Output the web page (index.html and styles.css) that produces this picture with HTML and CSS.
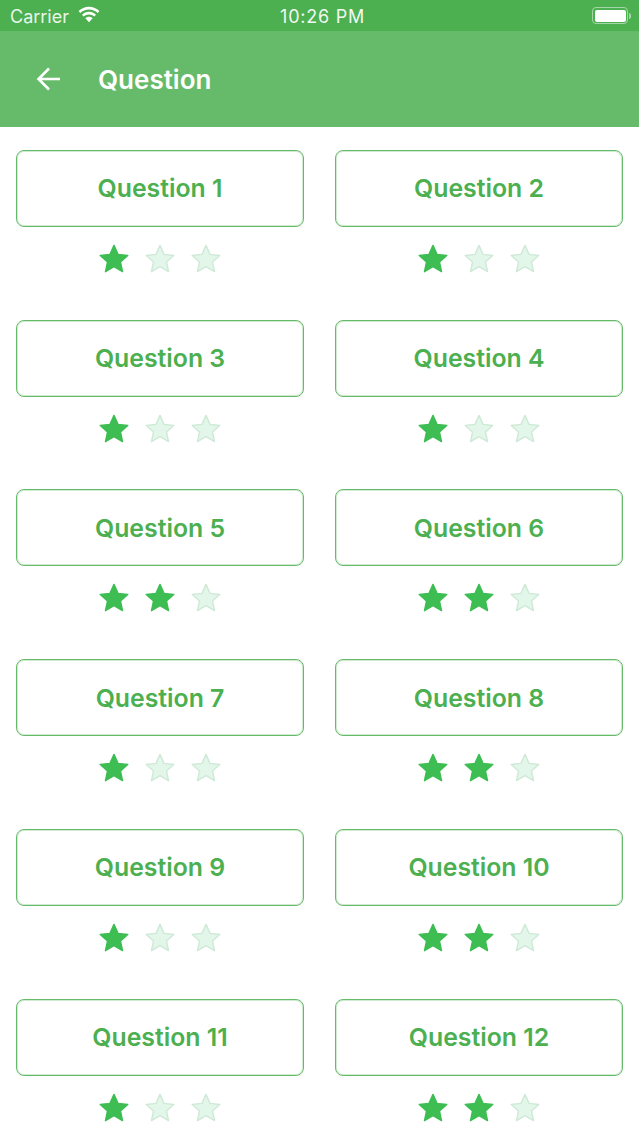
FILE: index.html
```html
<!DOCTYPE html>
<html lang="en">
<head>
<meta charset="utf-8">
<title>Question</title>
<link rel="stylesheet" href="styles.css">
</head>
<body>
<svg class="defs" width="0" height="0" aria-hidden="true">
  <symbol id="star" viewBox="0 0 32 32">
    <path d="M16 1.500l4.300 9.600 10.400 1.100-7.800 7 2.200 10.300-9.100-5.300-9.100 5.300 2.200-10.300-7.800-7 10.400-1.100z" stroke-linejoin="round"/>
  </symbol>
</svg>
<div class="status">
  <div class="status-left">
    <span>Carrier</span>
    <svg class="wifi" viewBox="0 0 22 16"><path d="M11 3.200c3.200 0 6.100 1.200 8.300 3.300l1.500-1.700C18.200 2.300 14.800.8 11 .8S3.800 2.300 1.200 4.800l1.500 1.700C4.900 4.400 7.800 3.200 11 3.200z"/><path d="M11 7.900c1.900 0 3.700.7 5 2l1.600-1.700C15.800 6.500 13.500 5.500 11 5.500s-4.800 1-6.600 2.700L6 9.900c1.300-1.300 3.100-2 5-2z"/><path d="M11 10.200c-1.300 0-2.500.5-3.400 1.400L11 15.200l3.400-3.600c-.9-.9-2.100-1.400-3.400-1.400z"/></svg>
  </div>
  <span class="status-time">10:26 PM</span>
  <div class="battery"><span class="battery-body"><span class="battery-fill"></span></span><span class="battery-cap"></span></div>
</div>
<header class="appbar">
  <svg class="back" viewBox="0 0 28 28"><path d="M25 14H4M14 3.500L3.500 14 14 24.500"/></svg>
  <h1>Question</h1>
</header>
<main class="grid">
  <section class="item"><button class="question">Question 1</button><div class="stars"><svg class="star on"><use href="#star"/></svg><svg class="star off"><use href="#star"/></svg><svg class="star off"><use href="#star"/></svg></div></section>
  <section class="item"><button class="question">Question 2</button><div class="stars"><svg class="star on"><use href="#star"/></svg><svg class="star off"><use href="#star"/></svg><svg class="star off"><use href="#star"/></svg></div></section>
  <section class="item"><button class="question">Question 3</button><div class="stars"><svg class="star on"><use href="#star"/></svg><svg class="star off"><use href="#star"/></svg><svg class="star off"><use href="#star"/></svg></div></section>
  <section class="item"><button class="question">Question 4</button><div class="stars"><svg class="star on"><use href="#star"/></svg><svg class="star off"><use href="#star"/></svg><svg class="star off"><use href="#star"/></svg></div></section>
  <section class="item"><button class="question">Question 5</button><div class="stars"><svg class="star on"><use href="#star"/></svg><svg class="star on"><use href="#star"/></svg><svg class="star off"><use href="#star"/></svg></div></section>
  <section class="item"><button class="question">Question 6</button><div class="stars"><svg class="star on"><use href="#star"/></svg><svg class="star on"><use href="#star"/></svg><svg class="star off"><use href="#star"/></svg></div></section>
  <section class="item"><button class="question">Question 7</button><div class="stars"><svg class="star on"><use href="#star"/></svg><svg class="star off"><use href="#star"/></svg><svg class="star off"><use href="#star"/></svg></div></section>
  <section class="item"><button class="question">Question 8</button><div class="stars"><svg class="star on"><use href="#star"/></svg><svg class="star on"><use href="#star"/></svg><svg class="star off"><use href="#star"/></svg></div></section>
  <section class="item"><button class="question">Question 9</button><div class="stars"><svg class="star on"><use href="#star"/></svg><svg class="star off"><use href="#star"/></svg><svg class="star off"><use href="#star"/></svg></div></section>
  <section class="item"><button class="question">Question 10</button><div class="stars"><svg class="star on"><use href="#star"/></svg><svg class="star on"><use href="#star"/></svg><svg class="star off"><use href="#star"/></svg></div></section>
  <section class="item"><button class="question">Question 11</button><div class="stars"><svg class="star on"><use href="#star"/></svg><svg class="star off"><use href="#star"/></svg><svg class="star off"><use href="#star"/></svg></div></section>
  <section class="item"><button class="question">Question 12</button><div class="stars"><svg class="star on"><use href="#star"/></svg><svg class="star on"><use href="#star"/></svg><svg class="star off"><use href="#star"/></svg></div></section>
</main>
</body>
</html>
```

FILE: styles.css
```css
* { box-sizing: border-box; }
html, body { margin: 0; padding: 0; }
body {
  width: 639px;
  height: 1136px;
  overflow: hidden;
  background: #fff;
  font-family: Inter, "Liberation Sans", sans-serif;
}
.defs { position: absolute; }
.status {
  height: 31px;
  background: #4caf50;
  color: #fff;
  display: grid;
  grid-template-columns: 1fr auto 1fr;
  align-items: center;
  padding: 1px 8px 0 10px;
  font-size: 18px;
  font-weight: 400;
}
.status-left { display: flex; align-items: center; gap: 8px; color: #e8f5e9; }
.wifi { width: 24px; height: 17px; fill: #fff; margin-top: -4px; }
.status-time { letter-spacing: .75px; color: #f1f8f1; margin-left: 4px; }
.battery { display: flex; align-items: center; justify-content: flex-end; margin-top: -1px; }
.battery-body {
  width: 36px;
  height: 17px;
  border: 1.500px solid #a5d6a7;
  border-radius: 4px;
  padding: 1.500px;
  display: block;
}
.battery-fill { display: block; height: 100%; background: #fff; border-radius: 2px; }
.battery-cap { width: 2px; height: 6px; background: #a5d6a7; margin-left: 1px; border-radius: 0 2px 2px 0; }
.appbar {
  height: 96px;
  background: #66bb6a;
  color: #fff;
  display: flex;
  align-items: center;
  padding-left: 35px;
  gap: 35px;
}
.back { width: 28px; height: 28px; fill: none; stroke: #fff; stroke-width: 2.600; margin-top: -1px; }
.appbar h1 { margin: 1px 0 0; font-size: 26px; font-weight: 600; line-height: 1; }
.grid {
  display: grid;
  grid-template-columns: 288px 288px;
  column-gap: 31px;
  row-gap: 0;
  padding: 22.800px 16px 0;
}
.item { height: 169.800px; display: flex; flex-direction: column; align-items: stretch; }
.question {
  height: 77px;
  background: #fff;
  border: 1px solid #66bb6a;
  box-shadow: inset 0 0 0 1px rgba(102, 187, 106, .3);
  border-radius: 8px;
  color: #4caf50;
  font-family: inherit;
  font-size: 24.800px;
  font-weight: 600;
  padding: 0;
}
.stars { display: flex; justify-content: center; gap: 16px; margin-top: 17px; }
.star { width: 30px; height: 30px; display: block; }
.star.on { fill: #3dbd52; stroke: #3dbd52; stroke-width: 1.500; }
.star.off { fill: #e3f6ea; stroke: #cfe9d7; stroke-width: 1.500; }
```
